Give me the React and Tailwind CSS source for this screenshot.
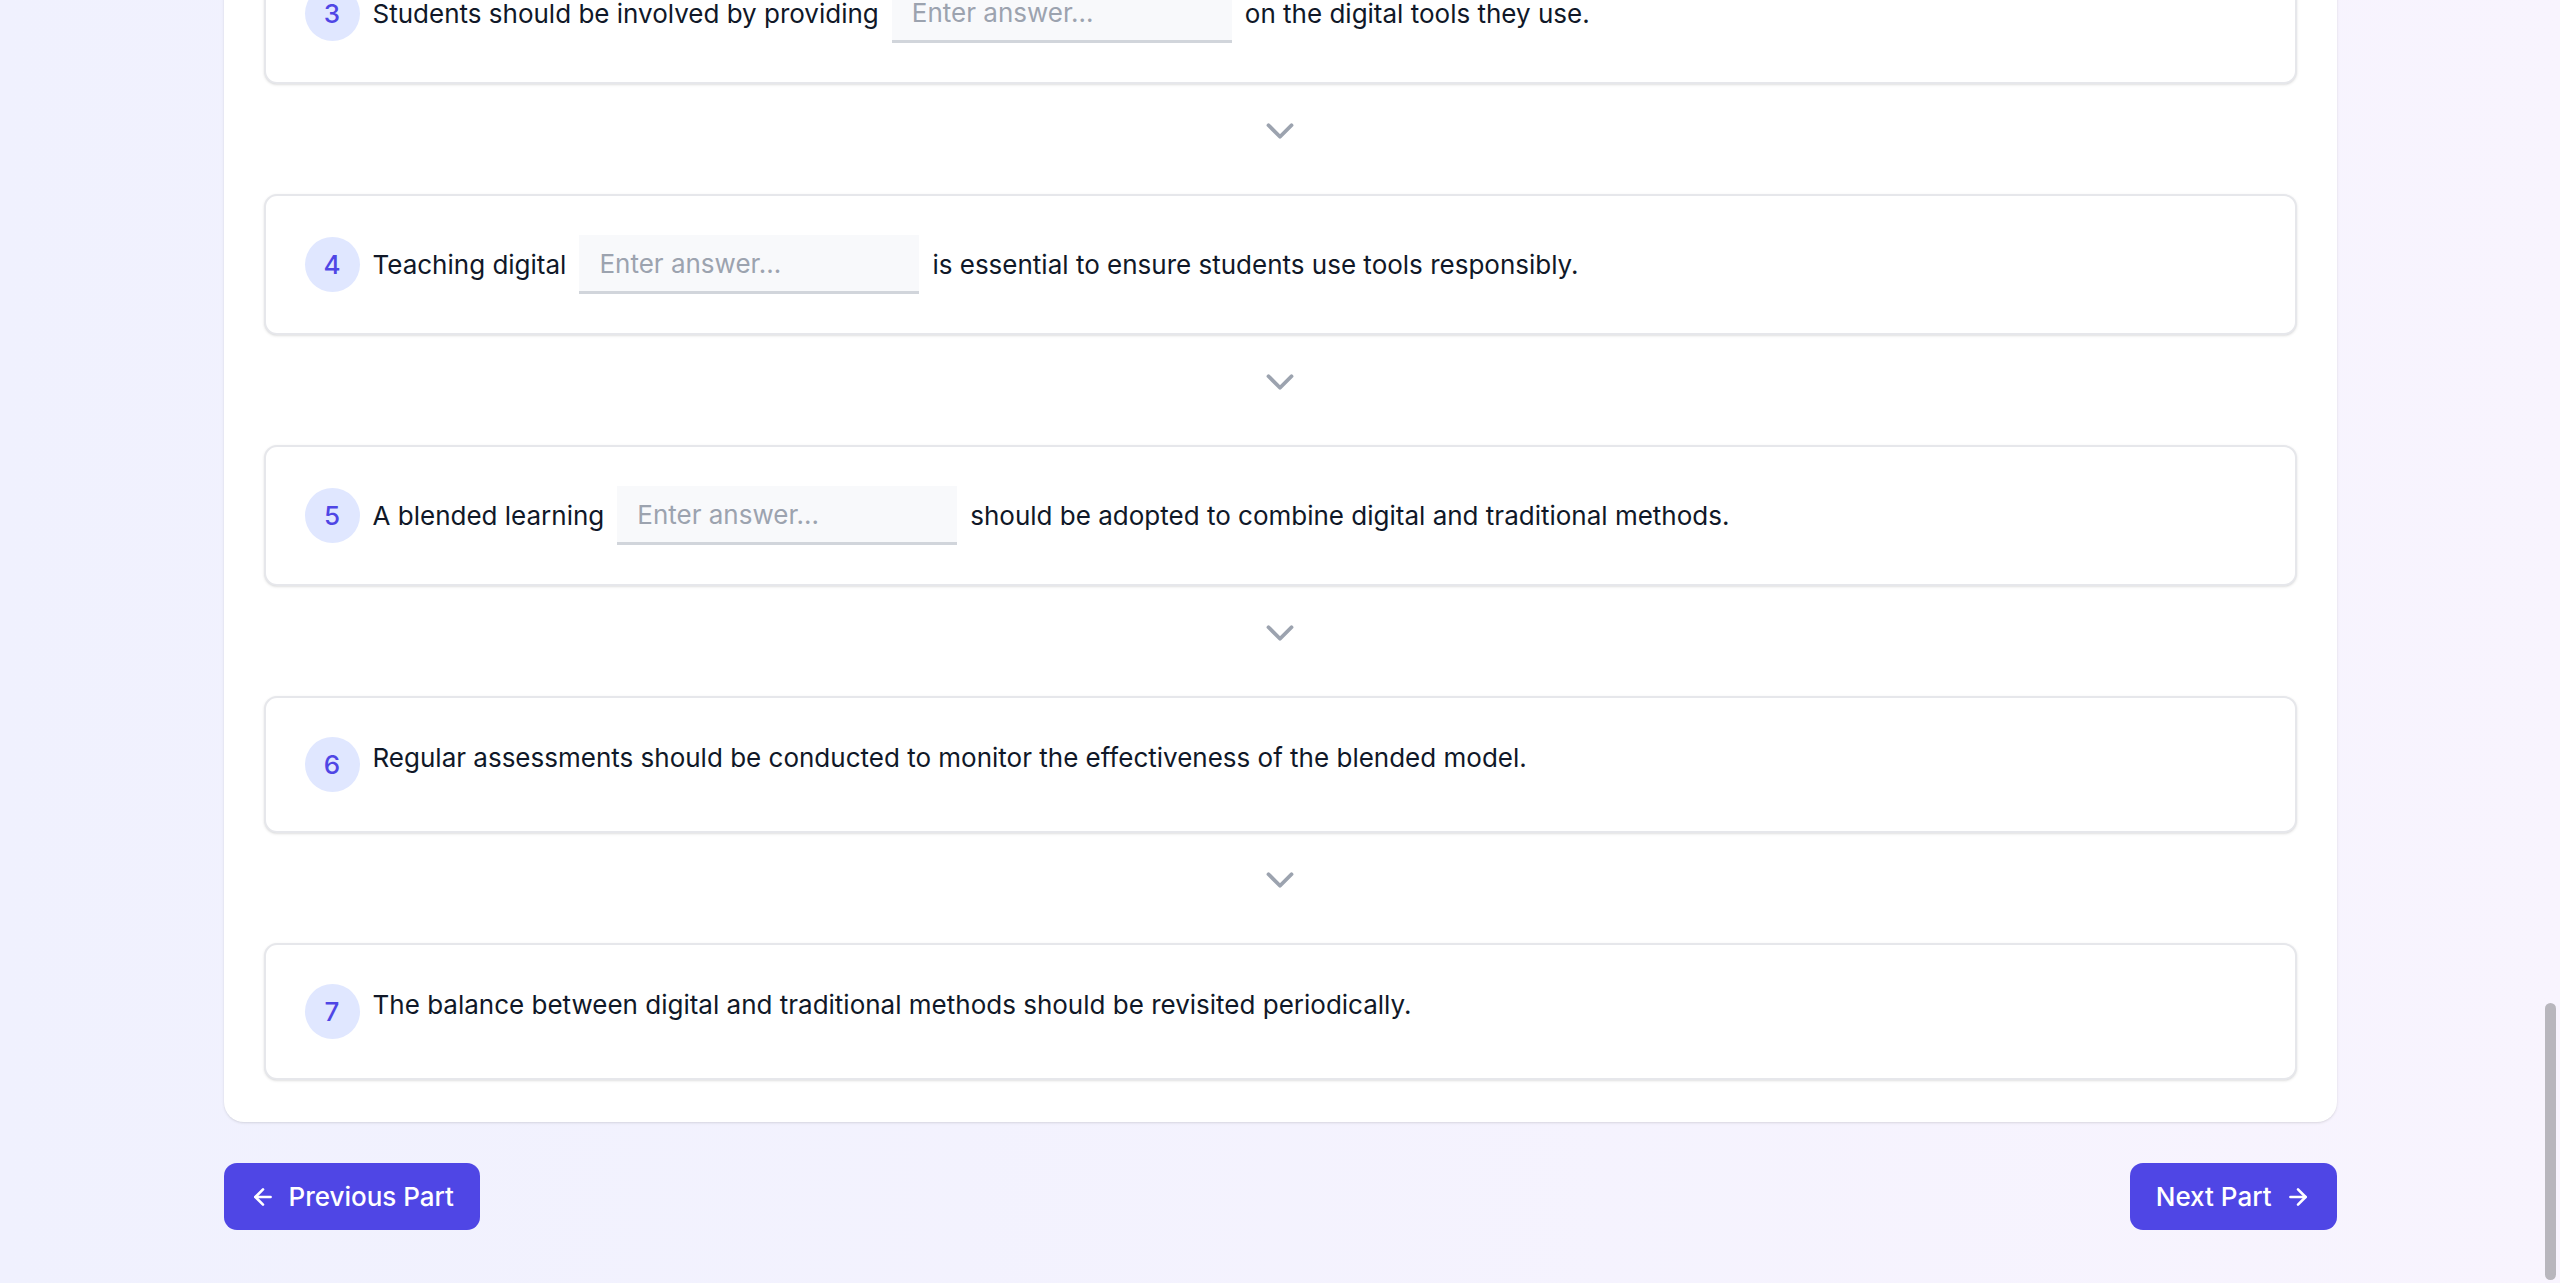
import { ChevronDown, ArrowLeft, ArrowRight } from 'lucide-react';

const questions = [
    { n: 3, before: 'Students should be involved by providing', after: 'on the digital tools they use.', blank: true },
    { n: 4, before: 'Teaching digital', after: 'is essential to ensure students use tools responsibly.', blank: true },
    { n: 5, before: 'A blended learning', after: 'should be adopted to combine digital and traditional methods.', blank: true },
    { n: 6, before: 'Regular assessments should be conducted to monitor the effectiveness of the blended model.', blank: false },
    { n: 7, before: 'The balance between digital and traditional methods should be revisited periodically.', blank: false },
];

function QuestionCard({ q }) {
    return (
        <div className="bg-white border-2 border-[#e6e7eb] rounded-[13px] shadow-sm p-[39px]">
            <div className={q.blank ? "flex items-center gap-[13px]" : "flex items-start gap-[13px]"}>
                {/* Number badge */}
                <div className="shrink-0 w-[55px] h-[55px] rounded-full bg-[#e0e7ff] text-[#4f46e5] font-medium text-[26px] flex items-center justify-center">
                    {q.n}
                </div>
                {q.blank ? (
                    <div className="flex flex-wrap items-center gap-[13px] text-[26px] leading-[39px] text-gray-900">
                        <span>{q.before}</span>
                        <input
                            type="text"
                            placeholder="Enter answer..."
                            className="w-[340px] h-[59px] px-[20px] bg-[#f8f9fb] border-b-[3px] border-[#d1d5db] text-[26px] placeholder:text-[#9ca3af] outline-none"
                        />
                        <span>{q.after}</span>
                    </div>
                ) : (
                    <p className="text-[26px] leading-[39px] text-gray-900 pt-[1px]">{q.before}</p>
                )}
            </div>
        </div>
    );
}

export default function App() {
    return (
        <div className="h-[1283px] overflow-hidden flex flex-col justify-end bg-gradient-to-r from-[#f0f1fe] to-[#f8f4fe] pb-[53px] font-['Inter',sans-serif]">
            <div className="w-[2113px] mx-auto shrink-0">
                {/* Questions panel */}
                <div className="bg-white rounded-[20px] shadow-sm px-[40px] pt-[40px] pb-[42px]">
                    {questions.map((q, i) => (
                        <div key={q.n}>
                            <QuestionCard q={q} />
                            {i < questions.length - 1 && (
                                <div className="flex justify-center pt-[24px] pb-[40px]">
                                    <ChevronDown size={46} strokeWidth={2} className="text-[#9ca3af]" />
                                </div>
                            )}
                        </div>
                    ))}
                </div>

                {/* Navigation */}
                <div className="flex justify-between mt-[41px]">
                    <button className="flex items-center gap-[13px] h-[67px] px-[26px] rounded-[13px] bg-[#4f46e5] text-white text-[26px] font-medium">
                        <ArrowLeft size={26} strokeWidth={2.4} />
                        Previous Part
                    </button>
                    <button className="flex items-center gap-[13px] h-[67px] px-[26px] rounded-[13px] bg-[#4f46e5] text-white text-[26px] font-medium">
                        Next Part
                        <ArrowRight size={26} strokeWidth={2.4} />
                    </button>
                </div>
            </div>

            {/* overlay scrollbar */}
            <div className="fixed right-[4px] bottom-[3px] w-[11px] h-[277px] rounded-full bg-[#b8b6bd]" />
        </div>
    );
}
